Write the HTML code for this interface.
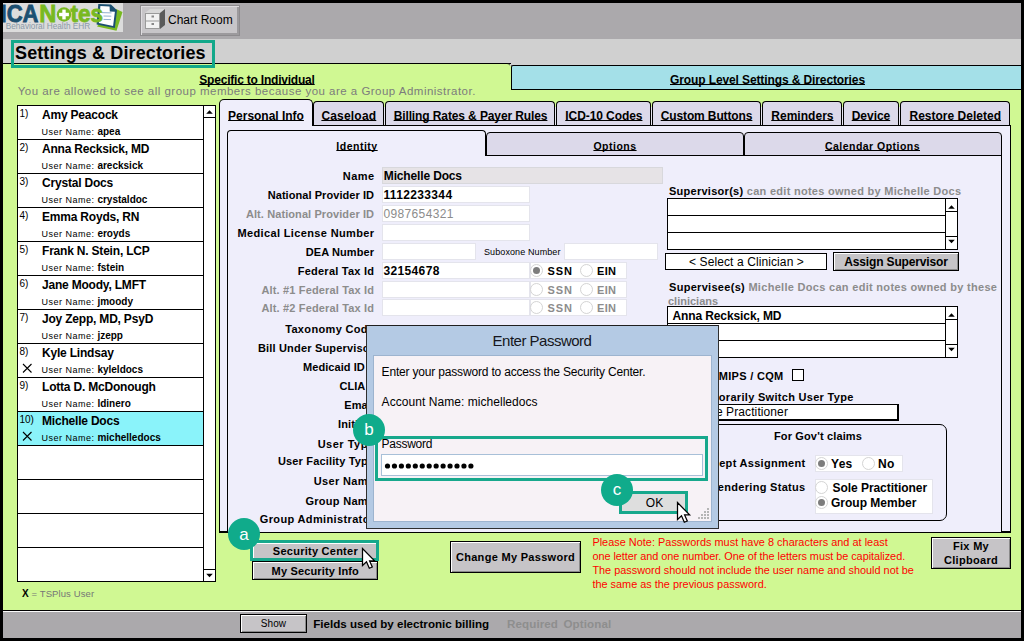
<!DOCTYPE html>
<html><head><meta charset="utf-8">
<style>
*{margin:0;padding:0;box-sizing:border-box}
html,body{width:1024px;height:641px;overflow:hidden;background:#000}
body{position:relative;font-family:"Liberation Sans",sans-serif;color:#000}
.a{position:absolute}
.nw{white-space:nowrap}
.u{text-decoration:underline;text-underline-offset:0px;text-decoration-skip-ink:none}
.rad{position:absolute;width:13px;height:13px;border-radius:50%;background:#fff;border:1px solid #d4d4d4}
.rad.on::after{content:"";position:absolute;left:2px;top:2px;width:7px;height:7px;border-radius:50%;background:#7d7d7d}
</style></head><body>
<div class="a" style="left:3px;top:3px;width:1018px;height:36px;background:#aba9ac"></div>
<div class="a" style="left:3px;top:3px;width:120px;height:29px;background:#dcdcdc"></div>
<div class="a" style="left:3px;top:39px;width:1018px;height:27px;background:#d0d0d0"></div>
<div class="a" style="left:3px;top:66px;width:1018px;height:544px;background:#d0f893"></div>
<div class="a" style="left:3px;top:63px;width:508px;height:1px;background:#000"></div>
<div class="a" style="left:3px;top:610px;width:1018px;height:1px;background:#000"></div>
<div class="a" style="left:3px;top:611px;width:1018px;height:27px;background:#aba9ac;border-top:1px solid #fafafa"></div>
<svg class="a" style="left:3px;top:3px" width="120" height="28" viewBox="3 3 120 28">

<circle cx="64" cy="14.5" r="7.2" fill="#78b920"/>
<rect x="62.3" y="9.6" width="3.4" height="9.8" fill="#fff"/>
<rect x="59.1" y="12.8" width="9.8" height="3.4" fill="#fff"/>
<text x="5.7" y="29" font-family="Liberation Sans" font-size="8.2" fill="#8a9aa8" textLength="84.5" lengthAdjust="spacingAndGlyphs">Behavioral Health EHR</text>
<polygon points="116,9 122.5,12 116.5,30.8 97,26.5 99,24" fill="#78b920"/>
<polygon points="98.3,4.0 111,4.4 117,10.2 114.8,27.9 96.6,24.4" fill="#1b4f71"/>
<polygon points="100.4,6.1 109.6,6.4 109.8,11.4 114.9,11.7 113.1,25.9 98.9,22.9" fill="#fff"/>
<line x1="102" y1="12.6" x2="111.5" y2="12.9" stroke="#86a8cc" stroke-width="0.9"/>
<line x1="103.5" y1="16" x2="111.3" y2="16.2" stroke="#86a8cc" stroke-width="0.9"/>
<line x1="103.5" y1="19.4" x2="111" y2="19.6" stroke="#86a8cc" stroke-width="0.9"/>
<g font-family="Liberation Sans" font-weight="bold" font-size="24" stroke-width="0.8">
<text x="0.5" y="21.6" fill="#1b4f71" stroke="#1b4f71" textLength="38" lengthAdjust="spacingAndGlyphs">ICA</text>
<text x="39.2" y="21.6" fill="#78b920" stroke="#78b920" textLength="17" lengthAdjust="spacingAndGlyphs">N</text>
<text x="70.5" y="21.6" fill="#78b920" stroke="#78b920" textLength="32.5" lengthAdjust="spacingAndGlyphs">tes</text>
</g>
</svg>
<div class="a" style="left:140px;top:5px;width:100px;height:31px;background:#c7c5c8;border:1px solid #8d8b8e;box-shadow:inset 1px 1px 0 #dedcdf, inset -2px -2px 0 #9c9a9d"></div>
<svg class="a" style="left:143px;top:8px" width="24" height="22" viewBox="0 0 24 22">
<polygon points="2,5 7,1 22,1 17,5" fill="#d8d8d8"/>
<polygon points="17,5 22,1 22,17 17,21" fill="#5a5a5a"/>
<rect x="2" y="5" width="15" height="16" fill="#9a9a9a"/>
<rect x="3" y="6" width="13" height="6.5" fill="#f2f2f2"/>
<rect x="3" y="13.5" width="13" height="6.5" fill="#f2f2f2"/>
<rect x="8.5" y="7.5" width="2.5" height="2" fill="#888"/>
<rect x="8.5" y="15" width="2.5" height="2" fill="#888"/>
</svg>
<div class="a nw " style="left:168px;top:14px;font-size:12px;line-height:13.79px;font-weight:normal;color:#000;">Chart Room</div>
<div class="a" style="left:3px;top:63px;width:507px;height:27px;border-top:1px solid #000;border-top-right-radius:3px;background:#d0f893"></div>
<div class="a" style="left:511px;top:65px;width:510px;height:25px;background:#a4e0e8;border:1px solid #000;border-right:none;border-top-left-radius:2px"></div>
<div class="a nw u" style="left:199.3px;top:74px;font-size:12px;line-height:13.79px;font-weight:bold;color:#000;letter-spacing:-0.21px">Specific to Individual</div>
<div class="a nw u" style="left:670px;top:74px;font-size:12px;line-height:13.79px;font-weight:bold;color:#000;letter-spacing:-0.11px">Group Level Settings &amp; Directories</div>
<div class="a nw " style="left:17.7px;top:85px;font-size:11.5px;line-height:13.21px;font-weight:normal;color:#7c7c7c;letter-spacing:0.48px">You are allowed to see all group members because you are a Group Administrator.</div>
<div class="a" style="left:11px;top:40px;width:204px;height:28px;border:3px solid #12a88a"></div>
<div class="a nw " style="left:15px;top:43px;font-size:18px;line-height:20.68px;font-weight:bold;color:#000;letter-spacing:0.12px">Settings &amp; Directories</div>
<div class="a" style="left:17px;top:105px;width:199px;height:477px;background:#fff;border:1px solid #000;border-width:1px 1px 1px 1px"></div>
<div class="a" style="left:18px;top:139px;width:185px;height:1px;background:#000"></div>
<div class="a nw " style="left:19.5px;top:108px;font-size:10px;line-height:11.49px;font-weight:normal;color:#000;">1)</div>
<div class="a nw " style="left:42px;top:109px;font-size:12px;line-height:13.79px;font-weight:bold;color:#000;letter-spacing:-0.2px">Amy Peacock</div>
<div class="a nw " style="left:41.4px;top:126px;font-size:10px;line-height:11.49px;font-weight:normal;color:#000;"><span style="letter-spacing:0.5px;font-size:9px">User Name: </span><b>apea</b></div>
<div class="a" style="left:18px;top:173px;width:185px;height:1px;background:#000"></div>
<div class="a nw " style="left:19.5px;top:142px;font-size:10px;line-height:11.49px;font-weight:normal;color:#000;">2)</div>
<div class="a nw " style="left:42px;top:143px;font-size:12px;line-height:13.79px;font-weight:bold;color:#000;letter-spacing:-0.2px">Anna Recksick, MD</div>
<div class="a nw " style="left:41.4px;top:160px;font-size:10px;line-height:11.49px;font-weight:normal;color:#000;"><span style="letter-spacing:0.5px;font-size:9px">User Name: </span><b>arecksick</b></div>
<div class="a" style="left:18px;top:207px;width:185px;height:1px;background:#000"></div>
<div class="a nw " style="left:19.5px;top:176px;font-size:10px;line-height:11.49px;font-weight:normal;color:#000;">3)</div>
<div class="a nw " style="left:42px;top:177px;font-size:12px;line-height:13.79px;font-weight:bold;color:#000;letter-spacing:-0.2px">Crystal Docs</div>
<div class="a nw " style="left:41.4px;top:194px;font-size:10px;line-height:11.49px;font-weight:normal;color:#000;"><span style="letter-spacing:0.5px;font-size:9px">User Name: </span><b>crystaldoc</b></div>
<div class="a" style="left:18px;top:241px;width:185px;height:1px;background:#000"></div>
<div class="a nw " style="left:19.5px;top:210px;font-size:10px;line-height:11.49px;font-weight:normal;color:#000;">4)</div>
<div class="a nw " style="left:42px;top:211px;font-size:12px;line-height:13.79px;font-weight:bold;color:#000;letter-spacing:-0.2px">Emma Royds, RN</div>
<div class="a nw " style="left:41.4px;top:228px;font-size:10px;line-height:11.49px;font-weight:normal;color:#000;"><span style="letter-spacing:0.5px;font-size:9px">User Name: </span><b>eroyds</b></div>
<div class="a" style="left:18px;top:275px;width:185px;height:1px;background:#000"></div>
<div class="a nw " style="left:19.5px;top:244px;font-size:10px;line-height:11.49px;font-weight:normal;color:#000;">5)</div>
<div class="a nw " style="left:42px;top:245px;font-size:12px;line-height:13.79px;font-weight:bold;color:#000;letter-spacing:-0.2px">Frank N. Stein, LCP</div>
<div class="a nw " style="left:41.4px;top:262px;font-size:10px;line-height:11.49px;font-weight:normal;color:#000;"><span style="letter-spacing:0.5px;font-size:9px">User Name: </span><b>fstein</b></div>
<div class="a" style="left:18px;top:309px;width:185px;height:1px;background:#000"></div>
<div class="a nw " style="left:19.5px;top:278px;font-size:10px;line-height:11.49px;font-weight:normal;color:#000;">6)</div>
<div class="a nw " style="left:42px;top:279px;font-size:12px;line-height:13.79px;font-weight:bold;color:#000;letter-spacing:-0.2px">Jane Moody, LMFT</div>
<div class="a nw " style="left:41.4px;top:296px;font-size:10px;line-height:11.49px;font-weight:normal;color:#000;"><span style="letter-spacing:0.5px;font-size:9px">User Name: </span><b>jmoody</b></div>
<div class="a" style="left:18px;top:343px;width:185px;height:1px;background:#000"></div>
<div class="a nw " style="left:19.5px;top:312px;font-size:10px;line-height:11.49px;font-weight:normal;color:#000;">7)</div>
<div class="a nw " style="left:42px;top:313px;font-size:12px;line-height:13.79px;font-weight:bold;color:#000;letter-spacing:-0.2px">Joy Zepp, MD, PsyD</div>
<div class="a nw " style="left:41.4px;top:330px;font-size:10px;line-height:11.49px;font-weight:normal;color:#000;"><span style="letter-spacing:0.5px;font-size:9px">User Name: </span><b>jzepp</b></div>
<div class="a" style="left:18px;top:377px;width:185px;height:1px;background:#000"></div>
<div class="a nw " style="left:19.5px;top:346px;font-size:10px;line-height:11.49px;font-weight:normal;color:#000;">8)</div>
<div class="a nw " style="left:42px;top:347px;font-size:12px;line-height:13.79px;font-weight:bold;color:#000;letter-spacing:-0.2px">Kyle Lindsay</div>
<div class="a nw " style="left:41.4px;top:364px;font-size:10px;line-height:11.49px;font-weight:normal;color:#000;"><span style="letter-spacing:0.5px;font-size:9px">User Name: </span><b>kyleldocs</b></div>
<svg class="a" style="left:22px;top:363px" width="10" height="10" viewBox="0 0 10 10"><path d="M1 1L9.5 9.5M9.5 1L1 9.5" stroke="#000" stroke-width="1.1"/></svg>
<div class="a" style="left:18px;top:411px;width:185px;height:1px;background:#000"></div>
<div class="a nw " style="left:19.5px;top:380px;font-size:10px;line-height:11.49px;font-weight:normal;color:#000;">9)</div>
<div class="a nw " style="left:42px;top:381px;font-size:12px;line-height:13.79px;font-weight:bold;color:#000;letter-spacing:-0.2px">Lotta D. McDonough</div>
<div class="a nw " style="left:41.4px;top:398px;font-size:10px;line-height:11.49px;font-weight:normal;color:#000;"><span style="letter-spacing:0.5px;font-size:9px">User Name: </span><b>ldinero</b></div>
<div class="a" style="left:18px;top:412px;width:185px;height:33px;background:#8af3fa"></div>
<div class="a" style="left:18px;top:445px;width:185px;height:1px;background:#000"></div>
<div class="a nw " style="left:19.5px;top:414px;font-size:10px;line-height:11.49px;font-weight:normal;color:#000;">10)</div>
<div class="a nw " style="left:42px;top:415px;font-size:12px;line-height:13.79px;font-weight:bold;color:#000;letter-spacing:-0.2px">Michelle Docs</div>
<div class="a nw " style="left:41.4px;top:432px;font-size:10px;line-height:11.49px;font-weight:normal;color:#000;"><span style="letter-spacing:0.5px;font-size:9px">User Name: </span><b>michelledocs</b></div>
<svg class="a" style="left:22px;top:431px" width="10" height="10" viewBox="0 0 10 10"><path d="M1 1L9.5 9.5M9.5 1L1 9.5" stroke="#000" stroke-width="1.1"/></svg>
<div class="a" style="left:18px;top:479px;width:185px;height:1px;background:#000"></div>
<div class="a" style="left:18px;top:513px;width:185px;height:1px;background:#000"></div>
<div class="a" style="left:18px;top:547px;width:185px;height:1px;background:#000"></div>
<div class="a" style="left:203px;top:105px;width:13px;height:477px;background:#fff;border-left:1px solid #000;border-right:1px solid #000"></div>
<div class="a" style="left:203px;top:105px;width:13px;height:13px;border:1px solid #000;background:#fff"></div>
<div class="a" style="left:203px;top:569px;width:13px;height:13px;border:1px solid #000;background:#fff"></div>
<svg class="a" style="left:204px;top:107px" width="11" height="9"><polygon points="2.2,6.8 8.8,6.8 5.5,3.2" fill="#000"/></svg>
<svg class="a" style="left:204px;top:571px" width="11" height="9"><polygon points="2.2,2.7 8.8,2.7 5.5,6.3" fill="#000"/></svg>
<div class="a nw " style="left:22px;top:589px;font-size:9.5px;line-height:10.92px;font-weight:normal;color:#767676;letter-spacing:0.1px"><span style="color:#000;font-weight:bold;font-size:10px">X</span> = TSPlus User</div>
<div class="a" style="left:219px;top:126px;width:792px;height:407px;background:#efeefb;border:1px solid #000;border-top:none;border-bottom-width:2px"></div>
<div class="a" style="left:219px;top:125px;width:792px;height:1px;background:#000"></div>
<div class="a" style="left:220px;top:107px;width:790px;height:18px;background:#e8e6f2"></div>
<div class="a" style="left:219px;top:99px;width:94px;height:27px;background:#efeefb;border:1px solid #000;border-bottom:none;border-top-left-radius:5px;border-top-right-radius:5px"></div>
<div class="a nw u" style="left:-34.00999999999999px;width:600px;text-align:center;top:110px;font-size:12px;line-height:13.79px;font-weight:bold;color:#000;letter-spacing:-0.02px">Personal Info</div>
<div class="a" style="left:313px;top:101px;width:71px;height:24px;background:#dcd9ea;border:1px solid #000;border-bottom:none;border-top-left-radius:4px;border-top-right-radius:4px"></div>
<div class="a nw u" style="left:48.84500000000003px;width:600px;text-align:center;top:110px;font-size:12px;line-height:13.79px;font-weight:bold;color:#000;letter-spacing:0.19px">Caseload</div>
<div class="a" style="left:385px;top:101px;width:170px;height:24px;background:#dcd9ea;border:1px solid #000;border-bottom:none;border-top-left-radius:4px;border-top-right-radius:4px"></div>
<div class="a nw u" style="left:170.54500000000002px;width:600px;text-align:center;top:110px;font-size:12px;line-height:13.79px;font-weight:bold;color:#000;letter-spacing:-0.11px">Billing Rates &amp; Payer Rules</div>
<div class="a" style="left:556px;top:101px;width:95px;height:24px;background:#dcd9ea;border:1px solid #000;border-bottom:none;border-top-left-radius:4px;border-top-right-radius:4px"></div>
<div class="a nw u" style="left:303.865px;width:600px;text-align:center;top:110px;font-size:12px;line-height:13.79px;font-weight:bold;color:#000;letter-spacing:-0.07px">ICD-10 Codes</div>
<div class="a" style="left:652px;top:101px;width:109px;height:24px;background:#dcd9ea;border:1px solid #000;border-bottom:none;border-top-left-radius:4px;border-top-right-radius:4px"></div>
<div class="a nw u" style="left:406.5400000000001px;width:600px;text-align:center;top:110px;font-size:12px;line-height:13.79px;font-weight:bold;color:#000;letter-spacing:-0.12px">Custom Buttons</div>
<div class="a" style="left:762px;top:101px;width:80px;height:24px;background:#dcd9ea;border:1px solid #000;border-bottom:none;border-top-left-radius:4px;border-top-right-radius:4px"></div>
<div class="a nw u" style="left:502.41499999999996px;width:600px;text-align:center;top:110px;font-size:12px;line-height:13.79px;font-weight:bold;color:#000;letter-spacing:0.03px">Reminders</div>
<div class="a" style="left:843px;top:101px;width:56px;height:24px;background:#dcd9ea;border:1px solid #000;border-bottom:none;border-top-left-radius:4px;border-top-right-radius:4px"></div>
<div class="a nw u" style="left:570.98px;width:600px;text-align:center;top:110px;font-size:12px;line-height:13.79px;font-weight:bold;color:#000;letter-spacing:-0.04px">Device</div>
<div class="a" style="left:900px;top:101px;width:110px;height:24px;background:#dcd9ea;border:1px solid #000;border-bottom:none;border-top-left-radius:4px;border-top-right-radius:4px"></div>
<div class="a nw u" style="left:655.255px;width:600px;text-align:center;top:110px;font-size:12px;line-height:13.79px;font-weight:bold;color:#000;letter-spacing:0.01px">Restore Deleted</div>
<div class="a" style="left:227px;top:155px;width:775px;height:377px;background:#efeefb;border:1px solid #000;border-top:none;border-bottom:none"></div>
<div class="a" style="left:227px;top:130px;width:259px;height:26px;background:#efeefb;border:1px solid #000;border-bottom:none;border-top-left-radius:4px;border-top-right-radius:4px"></div>
<div class="a" style="left:486px;top:132px;width:258px;height:24px;background:#dcd9ea;border:1px solid #000;border-top-left-radius:4px;border-top-right-radius:4px"></div>
<div class="a" style="left:744px;top:132px;width:258px;height:24px;background:#dcd9ea;border:1px solid #000;border-top-left-radius:4px;border-top-right-radius:4px"></div>
<div class="a" style="left:486px;top:155px;width:516px;height:1px;background:#000"></div>
<div class="a nw u" style="left:57px;width:600px;text-align:center;top:140px;font-size:10.5px;line-height:12.06px;font-weight:bold;color:#000;letter-spacing:0.5px">Identity</div>
<div class="a nw u" style="left:315px;width:600px;text-align:center;top:140px;font-size:10.5px;line-height:12.06px;font-weight:bold;color:#000;letter-spacing:0.5px">Options</div>
<div class="a nw u" style="left:572.5px;width:600px;text-align:center;top:140px;font-size:10.5px;line-height:12.06px;font-weight:bold;color:#000;letter-spacing:0.47px">Calendar Options</div>
<div class="a nw " style="right:649.6px;top:170px;font-size:11px;line-height:12.64px;font-weight:bold;color:#000;text-align:right;letter-spacing:0.4px">Name</div>
<div class="a nw " style="right:649.94px;top:189px;font-size:11px;line-height:12.64px;font-weight:bold;color:#000;text-align:right;letter-spacing:0.06px">National Provider ID</div>
<div class="a nw " style="right:649.9100000000001px;top:208px;font-size:11px;line-height:12.64px;font-weight:bold;color:#8c8c8c;text-align:right;letter-spacing:0.09px">Alt. National Provider ID</div>
<div class="a nw " style="right:649.64px;top:227px;font-size:11px;line-height:12.64px;font-weight:bold;color:#000;text-align:right;letter-spacing:0.36px">Medical License Number</div>
<div class="a nw " style="right:649.9px;top:246px;font-size:11px;line-height:12.64px;font-weight:bold;color:#000;text-align:right;letter-spacing:0.1px">DEA Number</div>
<div class="a nw " style="right:649.76px;top:265px;font-size:11px;line-height:12.64px;font-weight:bold;color:#000;text-align:right;letter-spacing:0.24px">Federal Tax Id</div>
<div class="a nw " style="right:649.8399999999999px;top:284px;font-size:11px;line-height:12.64px;font-weight:bold;color:#8c8c8c;text-align:right;letter-spacing:0.16px">Alt. #1 Federal Tax Id</div>
<div class="a nw " style="right:649.8399999999999px;top:302px;font-size:11px;line-height:12.64px;font-weight:bold;color:#8c8c8c;text-align:right;letter-spacing:0.16px">Alt. #2 Federal Tax Id</div>
<div class="a nw " style="right:649.6600000000001px;top:323px;font-size:11px;line-height:12.64px;font-weight:bold;color:#000;text-align:right;letter-spacing:0.34px">Taxonomy Code</div>
<div class="a nw " style="right:649.8199999999999px;top:342px;font-size:11px;line-height:12.64px;font-weight:bold;color:#000;text-align:right;letter-spacing:0.18px">Bill Under Supervisor</div>
<div class="a nw " style="right:649.95px;top:361px;font-size:11px;line-height:12.64px;font-weight:bold;color:#000;text-align:right;letter-spacing:0.05px">Medicaid ID #</div>
<div class="a nw " style="right:650.0px;top:380px;font-size:11px;line-height:12.64px;font-weight:bold;color:#000;text-align:right;letter-spacing:0.0px">CLIA #</div>
<div class="a nw " style="right:649.9100000000001px;top:399px;font-size:11px;line-height:12.64px;font-weight:bold;color:#000;text-align:right;letter-spacing:0.09px">Email</div>
<div class="a nw " style="right:649.8199999999999px;top:418px;font-size:11px;line-height:12.64px;font-weight:bold;color:#000;text-align:right;letter-spacing:0.18px">Initials</div>
<div class="a nw " style="right:649.5px;top:438px;font-size:11px;line-height:12.64px;font-weight:bold;color:#000;text-align:right;letter-spacing:0.5px">User Type</div>
<div class="a nw " style="right:649.8399999999999px;top:455px;font-size:11px;line-height:12.64px;font-weight:bold;color:#000;text-align:right;letter-spacing:0.16px">User Facility Type</div>
<div class="a nw " style="right:649.6600000000001px;top:475px;font-size:11px;line-height:12.64px;font-weight:bold;color:#000;text-align:right;letter-spacing:0.34px">User Name</div>
<div class="a nw " style="right:649.72px;top:495px;font-size:11px;line-height:12.64px;font-weight:bold;color:#000;text-align:right;letter-spacing:0.28px">Group Name</div>
<div class="a nw " style="right:649.64px;top:513px;font-size:11px;line-height:12.64px;font-weight:bold;color:#000;text-align:right;letter-spacing:0.36px">Group Administrator</div>
<div class="a" style="left:382px;top:167px;width:281px;height:17px;background:#e6e3e6;border:1px solid #d8d8dc"></div>
<div class="a nw " style="left:383.8px;top:170px;font-size:12px;line-height:13.79px;font-weight:bold;color:#000;letter-spacing:-0.15px">Michelle Docs</div>
<div class="a" style="left:382px;top:186px;width:148px;height:17px;background:#fff;border:1px solid #e4e4ec"></div>
<div class="a nw " style="left:383.5px;top:189px;font-size:12px;line-height:13.79px;font-weight:bold;color:#000;letter-spacing:0.35px">1112233344</div>
<div class="a" style="left:382px;top:205px;width:148px;height:17px;background:#fff;border:1px solid #e4e4ec"></div>
<div class="a nw " style="left:383.5px;top:208px;font-size:12px;line-height:13.79px;font-weight:normal;color:#8c8c8c;letter-spacing:0.35px">0987654321</div>
<div class="a" style="left:382px;top:224px;width:148px;height:17px;background:#fff;border:1px solid #e4e4ec"></div>
<div class="a" style="left:382px;top:243px;width:94px;height:17px;background:#fff;border:1px solid #e4e4ec"></div>
<div class="a nw " style="left:484px;top:247px;font-size:9px;line-height:10.34px;font-weight:normal;color:#000;letter-spacing:0.1px">Suboxone Number</div>
<div class="a" style="left:564px;top:243px;width:94px;height:17px;background:#fff;border:1px solid #e4e4ec"></div>
<div class="a" style="left:382px;top:262px;width:148px;height:17px;background:#fff;border:1px solid #e4e4ec"></div>
<div class="a nw " style="left:383.5px;top:265px;font-size:12px;line-height:13.79px;font-weight:bold;color:#000;letter-spacing:0.35px">32154678</div>
<div class="a" style="left:382px;top:281px;width:148px;height:17px;background:#fff;border:1px solid #e4e4ec"></div>
<div class="a" style="left:382px;top:299px;width:148px;height:17px;background:#fff;border:1px solid #e4e4ec"></div>
<div class="a" style="left:530px;top:262px;width:97px;height:17px;background:#fff;border:1px solid #e4e4ec"></div>
<div class="rad on" style="left:530px;top:264px"></div>
<div class="a nw " style="left:547.5px;top:265px;font-size:11px;line-height:12.64px;font-weight:bold;color:#000;letter-spacing:0.9px">SSN</div>
<div class="rad" style="left:580px;top:264px"></div>
<div class="a nw " style="left:597px;top:265px;font-size:11px;line-height:12.64px;font-weight:bold;color:#000;letter-spacing:0.3px">EIN</div>
<div class="a" style="left:530px;top:281px;width:97px;height:17px;background:#fff;border:1px solid #e4e4ec"></div>
<div class="rad " style="left:530px;top:283px"></div>
<div class="a nw " style="left:547.5px;top:284px;font-size:11px;line-height:12.64px;font-weight:bold;color:#8c8c8c;letter-spacing:0.9px">SSN</div>
<div class="rad" style="left:580px;top:283px"></div>
<div class="a nw " style="left:597px;top:284px;font-size:11px;line-height:12.64px;font-weight:bold;color:#8c8c8c;letter-spacing:0.3px">EIN</div>
<div class="a" style="left:530px;top:299px;width:97px;height:17px;background:#fff;border:1px solid #e4e4ec"></div>
<div class="rad " style="left:530px;top:301px"></div>
<div class="a nw " style="left:547.5px;top:302px;font-size:11px;line-height:12.64px;font-weight:bold;color:#8c8c8c;letter-spacing:0.9px">SSN</div>
<div class="rad" style="left:580px;top:301px"></div>
<div class="a nw " style="left:597px;top:302px;font-size:11px;line-height:12.64px;font-weight:bold;color:#8c8c8c;letter-spacing:0.3px">EIN</div>
<div class="a nw " style="left:668.9px;top:185px;font-size:11px;line-height:12.64px;font-weight:bold;color:#000;letter-spacing:0.28px">Supervisor(s)<span style="color:#8c8c8c"> can edit notes owned by Michelle Docs</span></div>
<div class="a" style="left:667px;top:198px;width:291px;height:52px;background:#fff;border:1px solid #000"></div>
<div class="a" style="left:667px;top:215px;width:279px;height:1px;background:#000"></div>
<div class="a" style="left:667px;top:232px;width:279px;height:1px;background:#000"></div>
<div class="a" style="left:945px;top:198px;width:1px;height:52px;background:#000"></div>
<div class="a" style="left:945px;top:211px;width:13px;height:1px;background:#000"></div>
<div class="a" style="left:945px;top:236px;width:13px;height:1px;background:#000"></div>
<svg class="a" style="left:946px;top:202px" width="11" height="9"><polygon points="2.2,6.8 8.8,6.8 5.5,3.2" fill="#000"/></svg>
<svg class="a" style="left:946px;top:237px" width="11" height="9"><polygon points="2.2,2.7 8.8,2.7 5.5,6.3" fill="#000"/></svg>
<div class="a" style="left:665px;top:253px;width:162px;height:17px;background:#fff;border:1px solid #000"></div>
<div class="a nw " style="left:446.5px;width:600px;text-align:center;top:256px;font-size:12px;line-height:13.79px;font-weight:normal;color:#000;letter-spacing:0.1px">&lt; Select a Clinician &gt;</div>
<div class="a" style="left:833px;top:252px;width:126px;height:19px;background:#c6c4c7;border:1px solid #000;box-shadow:inset 1px 1px 0 #fff, inset -1px -1px 0 #8a8a8a"></div>
<div class="a nw " style="left:596px;width:600px;text-align:center;top:256px;font-size:12px;line-height:13.79px;font-weight:bold;color:#000;letter-spacing:-0.15px">Assign Supervisor</div>
<div class="a nw " style="left:669px;top:281px;font-size:11px;line-height:12.64px;font-weight:bold;color:#000;letter-spacing:0.3px">Supervisee(s)<span style="color:#8c8c8c"> Michelle Docs can edit notes owned by these</span></div>
<div class="a nw " style="left:668px;top:295px;font-size:11px;line-height:12.64px;font-weight:bold;color:#8c8c8c;letter-spacing:0px">clinicians</div>
<div class="a" style="left:667px;top:306px;width:291px;height:52px;background:#fff;border:1px solid #000"></div>
<div class="a" style="left:667px;top:323px;width:279px;height:1px;background:#000"></div>
<div class="a" style="left:667px;top:340px;width:279px;height:1px;background:#000"></div>
<div class="a" style="left:945px;top:306px;width:1px;height:52px;background:#000"></div>
<div class="a" style="left:945px;top:319px;width:13px;height:1px;background:#000"></div>
<div class="a" style="left:945px;top:344px;width:13px;height:1px;background:#000"></div>
<svg class="a" style="left:946px;top:310px" width="11" height="9"><polygon points="2.2,6.8 8.8,6.8 5.5,3.2" fill="#000"/></svg>
<svg class="a" style="left:946px;top:345px" width="11" height="9"><polygon points="2.2,2.7 8.8,2.7 5.5,6.3" fill="#000"/></svg>
<div class="a nw " style="left:672.4px;top:310px;font-size:12px;line-height:13.79px;font-weight:bold;color:#000;letter-spacing:-0.1px">Anna Recksick, MD</div>
<div class="a nw " style="right:240.5px;top:370px;font-size:11px;line-height:12.64px;font-weight:bold;color:#000;text-align:right;letter-spacing:0.3px">Report MIPS / CQM</div>
<div class="a" style="left:792px;top:369px;width:12px;height:12px;background:#fff;border:1.5px solid #000"></div>
<div class="a nw " style="right:170.39999999999998px;top:391px;font-size:11px;line-height:12.64px;font-weight:bold;color:#000;text-align:right;letter-spacing:0.3px">Temporarily Switch User Type</div>
<div class="a" style="left:668px;top:404px;width:231px;height:17px;background:#fff;border:1px solid #000;border-right-width:2px;border-bottom-width:2px"></div>
<div class="a nw " style="right:236px;top:406px;font-size:12px;line-height:13.79px;font-weight:normal;color:#000;text-align:right;letter-spacing:0.1px">Sole Practitioner</div>
<div class="a" style="left:690px;top:424px;width:257px;height:97px;border:1px solid #000;border-radius:7px"></div>
<div class="a nw " style="left:518px;width:600px;text-align:center;top:430px;font-size:11px;line-height:12.64px;font-weight:bold;color:#000;letter-spacing:0.15px">For Gov't claims</div>
<div class="a nw " style="right:218.5px;top:457px;font-size:11px;line-height:12.64px;font-weight:bold;color:#000;text-align:right;letter-spacing:0.3px">Accept Assignment</div>
<div class="a nw " style="right:218.5px;top:481px;font-size:11px;line-height:12.64px;font-weight:bold;color:#000;text-align:right;letter-spacing:0.3px">Rendering Status</div>
<div class="a" style="left:815px;top:455px;width:88px;height:17px;background:#fff;border:1px solid #e4e4ec"></div>
<div class="rad on" style="left:815px;top:457px"></div>
<div class="a nw " style="left:831px;top:458px;font-size:12px;line-height:13.79px;font-weight:bold;color:#000;letter-spacing:0.3px">Yes</div>
<div class="rad" style="left:862px;top:457px"></div>
<div class="a nw " style="left:878px;top:458px;font-size:12px;line-height:13.79px;font-weight:bold;color:#000;letter-spacing:0.3px">No</div>
<div class="a" style="left:815px;top:479px;width:118px;height:35px;background:#fff;border:1px solid #e4e4ec"></div>
<div class="rad" style="left:815px;top:481px"></div>
<div class="a nw " style="left:832.5px;top:482px;font-size:12px;line-height:13.79px;font-weight:bold;color:#000;letter-spacing:-0.05px">Sole Practitioner</div>
<div class="rad on" style="left:815px;top:496px"></div>
<div class="a nw " style="left:831px;top:497px;font-size:12px;line-height:13.79px;font-weight:bold;color:#000;letter-spacing:0px">Group Member</div>
<div class="a" style="left:250px;top:540px;width:129px;height:21px;background:#c6c4c7;border:3px solid #17a88c;box-shadow:inset 1px 1px 0 #fff"></div>
<div class="a nw " style="left:15.399999999999977px;width:600px;text-align:center;top:545px;font-size:11px;line-height:12.64px;font-weight:bold;color:#000;letter-spacing:0.25px">Security Center</div>
<div class="a" style="left:252px;top:561px;width:126px;height:19px;background:#c6c4c7;border:1px solid #000;box-shadow:inset 1px 1px 0 #fff, inset -1px -1px 0 #8a8a8a"></div>
<div class="a nw " style="left:15.300000000000011px;width:600px;text-align:center;top:565px;font-size:11px;line-height:12.64px;font-weight:bold;color:#000;letter-spacing:0.15px">My Security Info</div>
<div class="a" style="left:450px;top:541px;width:131px;height:32px;background:#c6c4c7;border:1px solid #000;box-shadow:inset 1px 1px 0 #fff, inset -1px -1px 0 #8a8a8a"></div>
<div class="a nw " style="left:215.5px;width:600px;text-align:center;top:551px;font-size:11px;line-height:12.64px;font-weight:bold;color:#000;letter-spacing:0.3px">Change My Password</div>
<div class="a" style="left:931px;top:537px;width:80px;height:32px;background:#c6c4c7;border:1px solid #000;box-shadow:inset 1px 1px 0 #fff, inset -1px -1px 0 #8a8a8a"></div>
<div class="a nw " style="left:671px;width:600px;text-align:center;top:540px;font-size:11px;line-height:12.64px;font-weight:bold;color:#000;letter-spacing:0.3px">Fix My</div>
<div class="a nw " style="left:671px;width:600px;text-align:center;top:554px;font-size:11px;line-height:12.64px;font-weight:bold;color:#000;letter-spacing:0.3px">Clipboard</div>
<div class="a nw " style="left:592.4px;top:536px;font-size:10.9px;line-height:12.52px;font-weight:normal;color:#ff0000;letter-spacing:0.02px">Please Note: Passwords must have 8 characters and at least</div>
<div class="a nw " style="left:592.4px;top:550px;font-size:10.9px;line-height:12.52px;font-weight:normal;color:#ff0000;letter-spacing:-0.05px">one letter and one number. One of the letters must be capitalized.</div>
<div class="a nw " style="left:592.4px;top:564px;font-size:10.9px;line-height:12.52px;font-weight:normal;color:#ff0000;letter-spacing:0px">The password should not include the user name and should not be</div>
<div class="a nw " style="left:592.4px;top:578px;font-size:10.9px;line-height:12.52px;font-weight:normal;color:#ff0000;letter-spacing:0px">the same as the previous password.</div>
<div class="a" style="left:240px;top:614px;width:67px;height:19px;background:#c6c4c7;border:1px solid #000;box-shadow:inset 1px 1px 0 #fff, inset -1px -1px 0 #8a8a8a"></div>
<div class="a nw " style="left:-26.5px;width:600px;text-align:center;top:618px;font-size:10px;line-height:11.49px;font-weight:normal;color:#000;letter-spacing:0.1px">Show</div>
<div class="a nw " style="left:313.2px;top:617px;font-size:11.6px;line-height:13.33px;font-weight:bold;color:#000;">Fields used by electronic billing</div>
<div class="a nw " style="left:507px;top:617px;font-size:11.6px;line-height:13.33px;font-weight:bold;color:#8e8e8e;letter-spacing:0.1px">Required</div>
<div class="a nw " style="left:563.5px;top:617px;font-size:11.6px;line-height:13.33px;font-weight:bold;color:#8e8e8e;letter-spacing:0.1px">Optional</div>
<div class="a" style="left:366px;top:325px;width:353px;height:204px;background:#b4cae4;border:1px solid #2f2f2f;border-top-color:#1f1f1f"></div>
<div class="a nw " style="left:242px;width:600px;text-align:center;top:332px;font-size:15px;line-height:17.23px;font-weight:normal;color:#161620;letter-spacing:-0.5px">Enter Password</div>
<div class="a" style="left:373px;top:355px;width:339px;height:167px;background:#f7f2f6;border:1px solid #9db4cf"></div>
<div class="a nw " style="left:381.6px;top:366px;font-size:12px;line-height:13.79px;font-weight:normal;color:#000;letter-spacing:-0.18px">Enter your password to access the Security Center.</div>
<div class="a nw " style="left:381.6px;top:396px;font-size:12px;line-height:13.79px;font-weight:normal;color:#000;letter-spacing:0.05px">Account Name: michelledocs</div>
<div class="a" style="left:375px;top:436px;width:333px;height:45px;border:3px solid #17a88c"></div>
<div class="a nw " style="left:381.5px;top:438px;font-size:12px;line-height:13.79px;font-weight:normal;color:#000;letter-spacing:-0.25px">Password</div>
<div class="a" style="left:381px;top:454px;width:322px;height:22px;background:#fff;border:1px solid #a8c0d8"></div>
<svg class="a" style="left:384px;top:462px" width="100" height="8"><circle cx="3.50" cy="4" r="2.6" fill="#000"/><circle cx="10.45" cy="4" r="2.6" fill="#000"/><circle cx="17.40" cy="4" r="2.6" fill="#000"/><circle cx="24.35" cy="4" r="2.6" fill="#000"/><circle cx="31.30" cy="4" r="2.6" fill="#000"/><circle cx="38.25" cy="4" r="2.6" fill="#000"/><circle cx="45.20" cy="4" r="2.6" fill="#000"/><circle cx="52.15" cy="4" r="2.6" fill="#000"/><circle cx="59.10" cy="4" r="2.6" fill="#000"/><circle cx="66.05" cy="4" r="2.6" fill="#000"/><circle cx="73.00" cy="4" r="2.6" fill="#000"/><circle cx="79.95" cy="4" r="2.6" fill="#000"/><circle cx="86.90" cy="4" r="2.6" fill="#000"/></svg>
<div class="a" style="left:619px;top:491px;width:69px;height:23px;background:#dedede;border:3px solid #17a88c"></div>
<div class="a nw " style="left:354.5px;width:600px;text-align:center;top:497px;font-size:12px;line-height:13.79px;font-weight:normal;color:#000;">OK</div>
<svg class="a" style="left:698px;top:508px" width="12" height="12"><rect x="9" y="0" width="2" height="2" fill="#b5b5b5"/><rect x="6" y="3" width="2" height="2" fill="#b5b5b5"/><rect x="9" y="3" width="2" height="2" fill="#b5b5b5"/><rect x="3" y="6" width="2" height="2" fill="#b5b5b5"/><rect x="6" y="6" width="2" height="2" fill="#b5b5b5"/><rect x="9" y="6" width="2" height="2" fill="#b5b5b5"/><rect x="0" y="9" width="2" height="2" fill="#b5b5b5"/><rect x="3" y="9" width="2" height="2" fill="#b5b5b5"/><rect x="6" y="9" width="2" height="2" fill="#b5b5b5"/><rect x="9" y="9" width="2" height="2" fill="#b5b5b5"/></svg>
<div class="a" style="left:228px;top:518px;width:32px;height:32px;background:#10ab8b;border-radius:50%"></div>
<div class="a nw " style="left:-56px;width:600px;text-align:center;top:525px;font-size:17px;line-height:19.53px;font-weight:normal;color:#fff;">a</div>
<div class="a" style="left:353px;top:413.5px;width:32px;height:32px;background:#10ab8b;border-radius:50%"></div>
<div class="a nw " style="left:69px;width:600px;text-align:center;top:420px;font-size:17px;line-height:19.53px;font-weight:normal;color:#fff;">b</div>
<div class="a" style="left:601px;top:473.5px;width:32px;height:32px;background:#10ab8b;border-radius:50%"></div>
<div class="a nw " style="left:317px;width:600px;text-align:center;top:480px;font-size:17px;line-height:19.53px;font-weight:normal;color:#fff;">c</div>
<svg class="a" style="left:361px;top:547px" width="16" height="24" viewBox="-1 -1 16 24"><path d="M0.5 0.5 L0.5 17.5 L4.5 13.8 L7.3 20.3 L10.3 19 L7.6 12.9 L12.6 12.9 Z" fill="#fff" stroke="#000" stroke-width="1.25" stroke-linejoin="miter"/></svg>
<svg class="a" style="left:676px;top:501px" width="16" height="24" viewBox="-1 -1 16 24"><path d="M0.5 0.5 L0.5 17.5 L4.5 13.8 L7.3 20.3 L10.3 19 L7.6 12.9 L12.6 12.9 Z" fill="#fff" stroke="#000" stroke-width="1.25" stroke-linejoin="miter"/></svg>
</body></html>
